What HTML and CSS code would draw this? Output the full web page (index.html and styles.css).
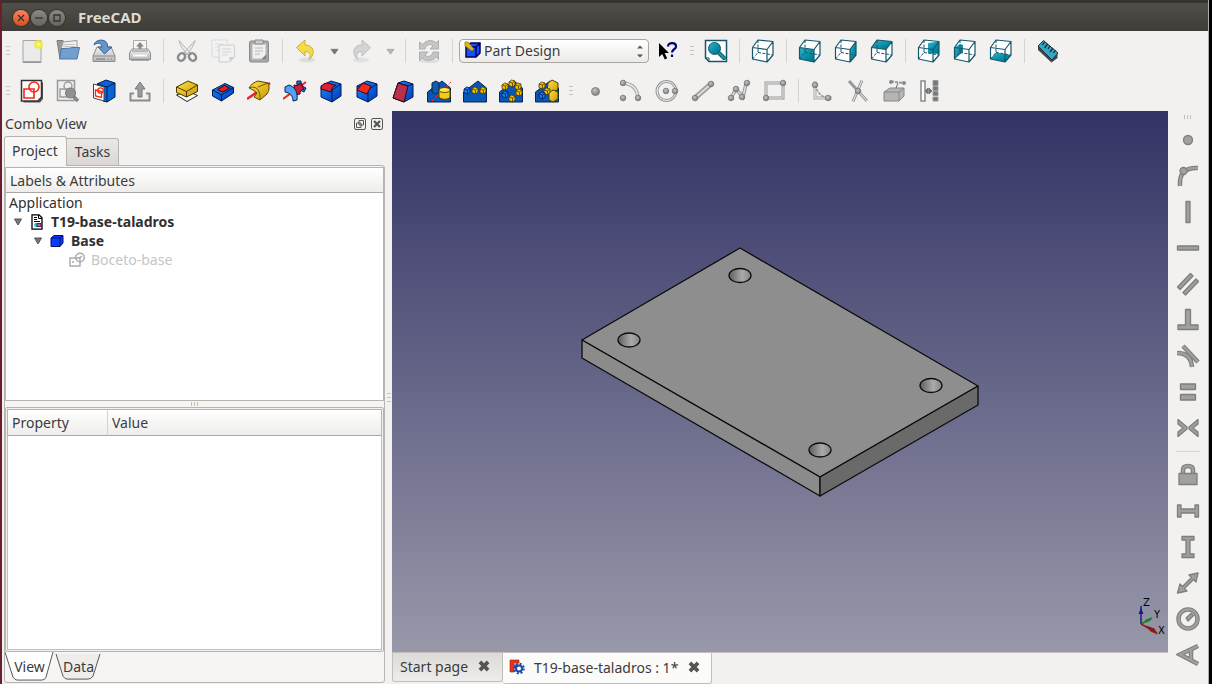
FILE: index.html
```html
<!DOCTYPE html>
<html lang="en">
<head>
<meta charset="utf-8">
<title>FreeCAD</title>
<link rel="stylesheet" href="styles.css">
</head>
<body>
<svg class="defs" aria-hidden="true">
  <defs>
    <linearGradient id="gTeal" x1="0" y1="0" x2="1" y2="1"><stop offset="0" stop-color="#35b4cc"/><stop offset=".6" stop-color="#058aa3"/><stop offset="1" stop-color="#04708a"/></linearGradient>
    <linearGradient id="gBlue" x1="0" y1="0" x2="1" y2="1"><stop offset="0" stop-color="#1a8cff"/><stop offset="1" stop-color="#0038b8"/></linearGradient>
    <linearGradient id="gGold" x1="0" y1="0" x2="1" y2="1"><stop offset="0" stop-color="#ffe14a"/><stop offset="1" stop-color="#c99700"/></linearGradient>
    <linearGradient id="gGrey" x1="0" y1="0" x2="0" y2="1"><stop offset="0" stop-color="#f4f4f4"/><stop offset="1" stop-color="#b5b5b5"/></linearGradient>
    <radialGradient id="gBall" cx=".4" cy=".35" r=".7"><stop offset="0" stop-color="#c4c4c4"/><stop offset="1" stop-color="#777"/></radialGradient>
    <radialGradient id="gSun"><stop offset="0" stop-color="#fffbb0"/><stop offset=".55" stop-color="#f5ea2c"/><stop offset="1" stop-color="#f5ea2c" stop-opacity="0"/></radialGradient>
    <linearGradient id="gHole" x1="0" y1="0" x2="1" y2="0"><stop offset="0" stop-color="#5e5e5e"/><stop offset=".6" stop-color="#aaa"/><stop offset="1" stop-color="#858585"/></linearGradient>
    <g id="wire" fill="none" stroke="#14566a" stroke-width="1.2" stroke-linejoin="round">
      <path d="M1.5 8.5 16 10.5V23L1.5 20zM1.5 8.5 7 1 22 2.5 16 10.5M22 2.5V16L16 23"/>
      <path d="M7 1V13.5L1.5 20M7 13.5 22 16" stroke-width="1" stroke-dasharray="3 1.5"/>
    </g>
    <g id="ball"><circle r="2.8" fill="url(#gBall)" stroke="#777" stroke-width=".8"/></g>
    <g id="cubeBody" stroke="#001850" stroke-width="1" stroke-linejoin="round">
      <path d="M2 7 12 2l10 3v12l-9 6L2 18z" fill="url(#gBlue)"/>
      <path d="M2 7l11 4 9-6M13 11v12" fill="none"/>
    </g>
    <g id="nugget" stroke="#4c3900" stroke-width=".8" stroke-linejoin="round">
      <path d="M0 2 2.500 0 6 1v4L3.500 7 0 5.500z" fill="#f2c200"/><path d="M0 2 3.500 3 6 1M3.500 3v4" fill="none"/>
    </g>
    <g id="bluenugget" stroke="#001850" stroke-width=".8" stroke-linejoin="round">
      <path d="M0 2 2.500 0 6 1v4L3.500 7 0 5.500z" fill="#1c80f0"/><path d="M0 2 3.500 3 6 1M3.500 3v4" fill="none"/>
    </g>
    <path id="slab" d="M.5 13 15 2l8.500 7v14H.5z" fill="#0957b4" stroke="#012554"/>
    <g id="sketchPic" fill="none" stroke="#f22a14" stroke-width="1.600"><path d="M4 10h10v9H4z"/><circle cx="14" cy="8" r="5"/></g>
  </defs>
</svg>

<div class="window">
<header class="titlebar">
  <button class="win-btn close" aria-label="Close"><svg viewBox="0 0 16 16"><path d="m5 5 6 6m0-6-6 6"/></svg></button>
  <button class="win-btn" aria-label="Minimize"><svg viewBox="0 0 16 16"><path d="M4 8h8"/></svg></button>
  <button class="win-btn" aria-label="Maximize"><svg viewBox="0 0 16 16"><path d="M5 5h6v6H5z"/></svg></button>
  <h1 class="title">FreeCAD</h1>
</header>

<div class="toolbar" role="toolbar" aria-label="File and view">
  <span class="grip"></span>
  <button class="tool" aria-label="New"><svg viewBox="0 0 24 24"><path d="M3 1.500h18v21H3z" fill="#ebebeb" stroke="#a5a5a5"/><path d="M2.500 23.500h19" stroke="#999"/><circle cx="18.500" cy="5.500" r="5.500" fill="url(#gSun)"/></svg></button>
  <button class="tool" aria-label="Open"><svg viewBox="0 0 24 24"><path d="M1 1.500h6l1 2h12v10L4 20z" fill="#999" stroke="#7b7b7b"/><path d="M7 3 21 1.500 21 10H5z" fill="#f0f0f0" stroke="#999"/><path d="M7 5.500h12M7 7.500h12" stroke="#c5c5c5"/><path d="M5.500 9.500q9 0 10-1H23.500L21 20H3.500z" fill="#729fcf" stroke="#4a78ad"/></svg></button>
  <button class="tool" aria-label="Save"><svg viewBox="0 0 24 24"><path d="M5 8h14l4 9v5.500H1V17z" fill="url(#gGrey)" stroke="#8b8b8b"/><path d="M1 17h22" stroke="#8b8b8b"/><path d="M4 20h9m3 0h1m2 0h1" stroke="#777"/><path d="M2 6C3 0 14-1 15.500 5.500V8H20l-7.500 7L6 8h4C9.500 4 6 3 2 6z" fill="#6895c9" stroke="#35659c"/></svg></button>
  <button class="tool" aria-label="Print"><svg viewBox="0 0 24 24"><path d="M5.500 11V1.500h13V11" fill="#f7f7f7" stroke="#aaa"/><path d="M12 3l4 4.500h-2.500V11h-3V7.500H8z" fill="#888"/><path d="M1.500 14 4 10h16l2.500 4v6.500h-21z" fill="url(#gGrey)" stroke="#8d8d8d"/><path d="M4 12h16" stroke="#888"/><path d="M5 16.500h14" stroke="#fff" stroke-width="2"/><path d="M3 21.500h18" stroke="#aaa"/></svg></button>
  <span class="sep"></span>
  <button class="tool" aria-label="Cut"><svg viewBox="0 0 24 24"><path d="M4 1.500Q5 8 14 17l2-2zM20 1.500Q19 8 10 17l-2-2z" fill="#eee" stroke="#b5b5b5"/><g fill="none" stroke="#8b8b8b" stroke-width="2.500"><ellipse cx="6.500" cy="18" rx="3.300" ry="4" transform="rotate(35 6.500 18)"/><ellipse cx="17.500" cy="18" rx="3.300" ry="4" transform="rotate(-35 17.500 18)"/></g></svg></button>
  <button class="tool" aria-label="Copy"><svg viewBox="0 0 24 24"><path d="M1 1h15v17H1z" fill="#f3f3f3" stroke="#dadada"/><path d="M4 5h9M4 8h9M4 11h4" stroke="#ddd"/><path d="M8 6h15.500v12l-5 5H8z" fill="#f1f1f1" stroke="#cecece"/><path d="M11 10h9M11 13h9M11 16h6" stroke="#ddd" stroke-width="1.500"/><path d="M23.500 18h-5v5z" fill="#ccc"/></svg></button>
  <button class="tool" aria-label="Paste"><svg viewBox="0 0 24 24"><rect x="2.500" y="2" width="19" height="21" rx="1.500" fill="#aaa" stroke="#8a8a8a"/><path d="M5 5h14v15H5z" fill="#efefef" stroke="#bbb"/><path d="M8 1h8v4H8z" fill="#ccc" stroke="#8a8a8a"/><path d="M8 9h8M8 12h8M8 15h5" stroke="#ccc" stroke-width="1.500"/><path d="M19.500 15v5.500H14z" fill="#888"/></svg></button>
  <span class="sep"></span>
  <button class="tool" aria-label="Undo"><svg viewBox="0 0 24 24"><ellipse cx="13" cy="21" rx="8" ry="2.500" fill="#ddd"/><path d="M2.500 8.500 11 1v5c9 0 11 9 4 14.500 3-6 0-8-4-8V17z" fill="#f3dc48" stroke="#cbb12c"/></svg></button>
  <button class="tool drop" aria-label="Undo list"><svg viewBox="0 0 10 8"><path d="M1 1.500h8L5 7z" fill="#777" stroke="#777"/></svg></button>
  <button class="tool" aria-label="Redo"><svg viewBox="0 0 24 24"><ellipse cx="11" cy="21" rx="8" ry="2.500" fill="#e1e1e1"/><path d="M20.500 8.500 12 1v5C3 6 1 15 8 20.500 5 14.500 8 12.500 12 12.500V17z" fill="#d4d4d4" stroke="#bdbdbd"/></svg></button>
  <button class="tool drop" aria-label="Redo list"><svg viewBox="0 0 10 8"><path d="M1 1.500h8L5 7z" fill="#b4b4b4" stroke="#aaa"/></svg></button>
  <span class="sep"></span>
  <button class="tool" aria-label="Refresh"><svg viewBox="0 0 24 24"><ellipse cx="12" cy="22" rx="10" ry="2" fill="#ddd"/><path d="M2.500 10V3l3 2.500C10 0 17 1 19 4l2.500-2.500V10H13l3-3c-3-3-7-1-8 3zM21.500 13v7.500L19 18c-5 5-11 4-14 1l-2.500 2.500V13H11l-3 3c3 3 7 1 8-3z" fill="#c5c5c5" stroke="#aeaeae"/></svg></button>
  <span class="sep"></span>
  <span class="combo">
    <svg class="combo-icon" viewBox="0 0 18 18"><path d="M2 5 7 2h9v10l-4 4H2z" fill="#1450ff" stroke="#000050" stroke-width="1.500"/><path d="M2 6h10l4-4M12 6v10" fill="none" stroke="#000050" stroke-width="1.500"/><path d="M1 1h3l6 7-2 2-7-5z" fill="#e2b51d" stroke="#8b6b00" stroke-width=".7"/></svg>
    <select class="workbench" aria-label="Workbench"><option>Part Design</option></select>
    <svg class="combo-arrows" viewBox="0 0 8 14"><path d="M1 4.500h6L4 1.500zM1 10.500h6L4 13.500z" fill="#555"/></svg>
  </span>
  <button class="tool" aria-label="What's this?"><svg viewBox="0 0 24 24"><path d="M3 4v14l3.200-3 2.600 5.500 2.400-1.200-2.600-5.300H13z" fill="#000"/><path d="M12 7.500c0-4.500 8-4.500 8 0 0 3-4 2.500-4 6M16 15.500v2.500" fill="none" stroke="#00007d" stroke-width="2.200"/></svg></button>
  <span class="grip"></span>
  <button class="tool" aria-label="Fit all"><svg viewBox="0 0 24 24"><path d="M1.500 1.500h21v21H5l-3.500-3.500z" fill="#fff" stroke="#14566a" stroke-width="1.500"/><path d="M1.500 19H5v3.500" fill="none" stroke="#14566a"/><path d="m15 14 5 5" stroke="#14566a" stroke-width="4" stroke-linecap="round"/><path d="m15 14 5 5" stroke="#1a9ab2" stroke-width="2" stroke-linecap="round"/><circle cx="10.500" cy="9.500" r="6" fill="url(#gTeal)" stroke="#14566a"/></svg></button>
  <span class="sep"></span>
  <button class="tool" aria-label="Axonometric"><svg viewBox="0 0 24 24"><path d="M1.500 8.500 7 1l15 1.500V16l-6 7-14.500-3z" fill="#fff"/><use href="#wire"/></svg></button>
  <span class="sep"></span>
  <button class="tool" aria-label="Front"><svg viewBox="0 0 24 24"><path d="M1.500 8.500 7 1l15 1.500V16l-6 7-14.500-3z" fill="#fff"/><path d="M1.500 8.500 16 10.500V23L1.500 20z" fill="url(#gTeal)"/><use href="#wire"/></svg></button>
  <button class="tool" aria-label="Right"><svg viewBox="0 0 24 24"><path d="M1.500 8.500 7 1l15 1.500V16l-6 7-14.500-3z" fill="#fff"/><path d="M16 10.500 22 2.500V16l-6 7z" fill="url(#gTeal)"/><use href="#wire"/></svg></button>
  <button class="tool" aria-label="Top"><svg viewBox="0 0 24 24"><path d="M1.500 8.500 7 1l15 1.500V16l-6 7-14.500-3z" fill="#fff"/><path d="M1.500 8.500 7 1l15 1.500-6 8z" fill="url(#gTeal)"/><use href="#wire"/></svg></button>
  <span class="sep"></span>
  <button class="tool" aria-label="Rear"><svg viewBox="0 0 24 24"><path d="M1.500 8.500 7 1l15 1.500V16l-6 7-14.500-3z" fill="#fff"/><path d="M11 4 22 2.500V15l-11-1z" fill="url(#gTeal)"/><use href="#wire"/></svg></button>
  <button class="tool" aria-label="Left"><svg viewBox="0 0 24 24"><path d="M1.500 8.500 7 1l15 1.500V16l-6 7-14.500-3z" fill="#fff"/><path d="M1.500 8.500 7 5l3 1v7l-8.500 7z" fill="url(#gTeal)"/><use href="#wire"/></svg></button>
  <button class="tool" aria-label="Bottom"><svg viewBox="0 0 24 24"><path d="M1.500 8.500 7 1l15 1.500V16l-6 7-14.500-3z" fill="#fff"/><path d="M1.500 20 7 13.500 22 16l-6 7z" fill="url(#gTeal)"/><use href="#wire"/></svg></button>
  <span class="sep"></span>
  <button class="tool" aria-label="Measure"><svg viewBox="0 0 24 24"><path d="M2 6v5l13.500 12.500 6-4.500v-4z" fill="#444"/><path d="M2 7 7.500 1.500 22 14l-6 7z" fill="#35a5c8" stroke="#1b333c"/><path d="m8.500 3-2 3m5-1-3 4m5.500-2-2 3m5-1-3 4m5.500-2-2 3" stroke="#10303a" stroke-width="1.300"/></svg></button>
</div>

<div class="toolbar" role="toolbar" aria-label="Part Design">
  <span class="grip"></span>
  <button class="tool" aria-label="New sketch"><svg viewBox="0 0 24 24"><path d="M3.500 3.500H23V20l-3 3.500H3.500z" fill="#555"/><path d="M1.500 1.500h20V18L18 22H1.500z" fill="#fff" stroke="#333" stroke-width="1.500"/><use href="#sketchPic"/></svg></button>
  <button class="tool" aria-label="View sketch"><svg viewBox="0 0 24 24"><path d="M1.500 1.500h17v20h-17z" fill="#eee" stroke="#999" stroke-width="1.500"/><path d="M4 10h9v8H4z" fill="none" stroke="#999" stroke-width="1.300"/><circle cx="12" cy="7" r="4" fill="none" stroke="#999" stroke-width="1.300"/><path d="m17 17 5 5" stroke="#888" stroke-width="3.500"/><circle cx="14.500" cy="14" r="5" fill="#919191" stroke="#777"/></svg></button>
  <button class="tool" aria-label="Map sketch"><svg viewBox="0 0 24 24"><path d="M5 5 14 1l9 3v14l-8 5-4-1z" fill="#0664d8" stroke="#001c50"/><path d="M5 5l10 3 8-4M15 8v15" fill="none" stroke="#001c50"/><path d="M1.500 5 12 8v14L1.500 19z" fill="#fff" stroke="#444"/><path d="M3.500 11l6 1.500v6l-6-1.500z" fill="none" stroke="#f22a14" stroke-width="1.300"/><circle cx="8.500" cy="11.500" r="2.700" fill="none" stroke="#f22a14" stroke-width="1.300"/></svg></button>
  <button class="tool" aria-label="Leave sketch"><svg viewBox="0 0 24 24"><path d="M6 14.500H2.500v7h19v-7H18" fill="none" stroke="#8b8b8b" stroke-width="2"/><path d="M12 3l5 7h-3v8h-4v-8H7z" fill="#9c9c9c" stroke="#777"/></svg></button>
  <span class="sep"></span>
  <button class="tool" aria-label="Pad"><svg viewBox="0 0 24 24"><path d="m1.500 16 10.500 6.500 10.500-6-10-4.500z" fill="#fff" stroke="#222"/><path d="M1.500 8 13 2l9.500 4v6.500l-11 5.500-10-4.500z" fill="url(#gGold)" stroke="#4b3a00"/><path d="M1.500 8l10 4.500 11-6.500M11.500 12.500V18" fill="none" stroke="#4b3a00"/></svg></button>
  <button class="tool" aria-label="Pocket"><svg viewBox="0 0 24 24"><path d="M1.500 11 14 4.500l8.500 4V14l-12 8-9-5z" fill="url(#gBlue)" stroke="#001850"/><path d="M1.500 11l9 5 12-7.500M10.500 16v6" fill="none" stroke="#001850"/><path d="m6.500 10.500 7-4 5 2.500-7 4z" fill="#e22121" stroke="#400"/></svg></button>
  <button class="tool" aria-label="Revolution"><svg viewBox="0 0 24 24"><path d="M0 20 23 4" stroke="#e22" stroke-width="2.500"/><path d="M2 9C4 5 8 3 11 2l10 2c2 4 1 8-1 11l-7 6-6-3 3-4-4-3z" fill="url(#gGold)" stroke="#5b4200"/><path d="M2 9c7-3 12 2 11 12M11 8l10-4" fill="none" stroke="#765600"/></svg></button>
  <button class="tool" aria-label="Groove"><svg viewBox="0 0 24 24"><path d="m0 20 23-17" stroke="#e22" stroke-width="2"/><path d="M14 2c-1 5 2 9 7 11l2-4c-4-2-5-4-5-7z" fill="#1671d9" stroke="#012554"/><path d="M11 6c3 1 5 0 6-2l4 6c-3 0-4 3-4 5l-5 1z" fill="#d31b34" stroke="#500014"/><path d="M2 8 6 6c6 2 9 7 8 15l-4 1c0-5-3-8-8-9z" fill="#51a3f1" stroke="#012554"/></svg></button>
  <button class="tool" aria-label="Fillet"><svg viewBox="0 0 24 24"><use href="#cubeBody"/><path d="M2 10C2 6 5 4 9 4l8 2.500c-3 0-4.500 2-4.500 6.500z" fill="#dc2033" stroke="#4b0008"/></svg></button>
  <button class="tool" aria-label="Chamfer"><svg viewBox="0 0 24 24"><use href="#cubeBody"/><path d="m2 11 6-7 8 3-4 8z" fill="#ee2b1c" stroke="#4b0008"/></svg></button>
  <button class="tool" aria-label="Draft"><svg viewBox="0 0 24 24"><path d="m7 4 6-2 9 3v13l-9 5-11-4z" fill="url(#gBlue)" stroke="#001850"/><path d="m7 4 10 3 5-2" fill="none" stroke="#001850"/><path d="m7 4 10 3-4 16-11-4z" fill="#b5324a" stroke="#3b0010"/></svg></button>
  <button class="tool" aria-label="Mirrored"><svg viewBox="0 0 24 24"><use href="#slab"/><path d="m5 4 4-2 3 2v9l-4 2-3-2z" fill="#145cab" stroke="#012554"/><path d="m5 22 19-19" stroke="#f22" stroke-dasharray="3 2"/><path d="M12 11v7c1 3 10 3 11 0v-7z" fill="#f3cb11" stroke="#5b4200"/><ellipse cx="17.500" cy="11" rx="5.500" ry="2.500" fill="#ffe84a" stroke="#5b4200"/></svg></button>
  <button class="tool" aria-label="Linear pattern"><svg viewBox="0 0 24 24"><use href="#slab"/><use href="#bluenugget" x="1" y="8"/><use href="#nugget" x="9" y="8"/><use href="#nugget" x="17" y="8"/></svg></button>
  <button class="tool" aria-label="Polar pattern"><svg viewBox="0 0 24 24"><use href="#slab"/><use href="#nugget" x="3" y="4"/><use href="#nugget" x="10" y="1"/><use href="#nugget" x="16" y="4"/><use href="#nugget" x="17" y="10"/><use href="#nugget" x="10" y="16"/><use href="#bluenugget" x="3" y="12"/></svg></button>
  <button class="tool" aria-label="Multi transform"><svg viewBox="0 0 24 24"><use href="#slab"/><path d="m13 4 4-3 6 3v6l-6 5-5-3z" fill="url(#gGold)" stroke="#4b3a00"/><use href="#nugget" x="4" y="3"/><use href="#nugget" x="9" y="9"/><path d="m14 14 4-3 5 2v7l-5 3-4-2z" fill="url(#gGold)" stroke="#4b3a00"/><use href="#bluenugget" x="4" y="13"/></svg></button>
  <span class="grip"></span>
  <button class="tool" aria-label="Point"><svg viewBox="0 0 24 24"><circle cx="12.500" cy="12.500" r="4" fill="url(#gBall)" stroke="#888"/></svg></button>
  <button class="tool" aria-label="Arc"><svg viewBox="0 0 24 24"><path d="M4 4q14 1 15 15" fill="none" stroke="#a0a0a0" stroke-width="3.500"/><path d="M4 4q14 1 15 15" fill="none" stroke="#eee" stroke-width="1.500"/><use href="#ball" x="4" y="4"/><use href="#ball" x="4" y="19"/><use href="#ball" x="19" y="19"/></svg></button>
  <button class="tool" aria-label="Circle"><svg viewBox="0 0 24 24"><circle cx="11.500" cy="12" r="9.500" fill="none" stroke="#9a9a9a" stroke-width="3"/><circle cx="11.500" cy="12" r="9.500" fill="none" stroke="#f1f1f1"/><use href="#ball" x="11" y="12"/><use href="#ball" x="20" y="12"/></svg></button>
  <button class="tool" aria-label="Line"><svg viewBox="0 0 24 24"><path d="M4 19 20 5" stroke="#999" stroke-width="5"/><path d="M4 19 20 5" stroke="#ddd" stroke-width="2"/><use href="#ball" x="4" y="19"/><use href="#ball" x="20" y="5"/></svg></button>
  <button class="tool" aria-label="Polyline"><svg viewBox="0 0 24 24"><path d="m4 19 5-9 7 8 3-13" fill="none" stroke="#999" stroke-width="3.500"/><path d="m4 19 5-9 7 8 3-13" fill="none" stroke="#ddd" stroke-width="1.500"/><use href="#ball" x="4" y="19"/><use href="#ball" x="9" y="10"/><use href="#ball" x="15" y="18"/><use href="#ball" x="20" y="4"/></svg></button>
  <button class="tool" aria-label="Rectangle"><svg viewBox="0 0 24 24"><path d="M3 4h17v15H3z" fill="none" stroke="#999" stroke-width="3"/><path d="M3 4h17v15H3z" fill="none" stroke="#eee"/><use href="#ball" x="20" y="4"/><use href="#ball" x="3" y="19"/></svg></button>
  <span class="sep"></span>
  <button class="tool" aria-label="Sketch fillet"><svg viewBox="0 0 24 24"><path d="M5 2v17h17" fill="none" stroke="#aaa" stroke-width="3"/><path d="M5 2v17h17" fill="none" stroke="#eee"/><path d="M6 6q1 11 12 13" fill="none" stroke="#999" stroke-width="1.500" stroke-dasharray="3 1"/><use href="#ball" x="5" y="6"/><use href="#ball" x="18" y="19"/></svg></button>
  <button class="tool" aria-label="Trim"><svg viewBox="0 0 24 24"><path d="M16 1.500 7 22.500M3 2l9 10 9 10" stroke="#999" stroke-width="3" fill="none"/><path d="M16 1.500 7 22.500M12 12l9 10" stroke="#eee" fill="none"/><use href="#ball" x="12" y="12"/></svg></button>
  <button class="tool" aria-label="External geometry"><svg viewBox="0 0 24 24"><path d="m2 13 6-4h14v8l-5 5H2z" fill="#b5b5b5" stroke="#888"/><path d="M2 13h15l5-4M17 13v9" fill="none" stroke="#888"/><path d="m14 9 2-5" stroke="#666"/><path d="M9 2.500 22 4" stroke="#999" stroke-width="2" stroke-dasharray="3 1"/><circle cx="9" cy="3" r="2" fill="#888"/><circle cx="22" cy="4" r="2" fill="#888"/></svg></button>
  <button class="tool" aria-label="Construction mode"><svg viewBox="0 0 24 24"><path d="M3 2h4v20H3z" fill="#fff" stroke="#888" stroke-width="1.500"/><path d="M15 1.500h5v5h-5zm0 6h5v4h-5zm0 5h5v4h-5zm0 5.500h5v4h-5z" fill="#777" stroke="#999"/><path d="m7 12 3-3v6zm7 0-3-3v6z" fill="#777" stroke="#777"/></svg></button>
</div>

<main class="workspace">
  <aside class="dock">
    <div class="dock-head">
      <h2 class="dock-title">Combo View</h2>
      <button class="dock-btn" aria-label="Float"><svg viewBox="0 0 12 12"><rect x=".5" y=".5" width="11" height="11" rx="1.500"/><path d="M5 2.500h4.500V7H5zM2.500 5H7v4.500H2.500z"/></svg></button>
      <button class="dock-btn" aria-label="Close dock"><svg viewBox="0 0 12 12"><rect x=".5" y=".5" width="11" height="11" rx="1.500"/><path d="m3 3 6 6m0-6-6 6" stroke-width="2.200"/></svg></button>
    </div>
    <div class="tabs" role="tablist">
      <button class="tab active" role="tab" aria-selected="true">Project</button>
      <button class="tab" role="tab" aria-selected="false">Tasks</button>
    </div>
    <div class="panel">
      <section class="tree">
        <div class="col-head">Labels &amp; Attributes</div>
        <ul class="nodes">
          <li class="node">Application</li>
          <li class="node level1 strong"><svg class="caret" viewBox="0 0 8 8"><path d="M.5 1h7L4 7z"/></svg><svg class="node-icon" viewBox="0 0 16 16"><path d="M3 .8h7l3 3v11.400H3z" fill="#fff" stroke="#000" stroke-width="1.300"/><path d="M9.500 1v3.500H13M5 3.500h3M5 5.500h3M5 7.500h6" fill="none" stroke="#000"/><circle cx="7" cy="11" r="2" fill="#3cc"/><path d="M8 9.500h4v3H8z" fill="#c5c" stroke="#000" stroke-width=".7"/></svg><span>T19-base-taladros</span></li>
          <li class="node level2 strong"><svg class="caret" viewBox="0 0 8 8"><path d="M.5 1h7L4 7z"/></svg><svg class="node-icon" viewBox="0 0 16 16"><path d="m2 5 3-2.500h9V10l-3 3.500H2z" fill="#0a3cff" stroke="#001060"/><path d="M2 5h9l3-2.500M11 5v8.500" fill="none" stroke="#001060"/></svg><span>Base</span></li>
          <li class="node level3 hidden-node"><svg class="node-icon" viewBox="0 0 16 16"><path d="M1 6h10v8H1z" fill="none" stroke="#aaa" stroke-width="1.400"/><circle cx="11" cy="5.500" r="4.300" fill="none" stroke="#aaa" stroke-width="1.400"/><path d="m3 10h2m5-4 3-2" stroke="#aaa" stroke-width="1.400"/></svg><span>Boceto-base</span></li>
        </ul>
      </section>
      <div class="split-h"><span class="grip-h"></span></div>
      <section class="props">
        <table class="prop-table">
          <thead><tr><th class="prop-col">Property</th><th>Value</th></tr></thead>
        </table>
      </section>
      <div class="bottom-tabs" role="tablist">
        <button class="slant active" role="tab" aria-selected="true"><svg viewBox="0 0 49 31" preserveAspectRatio="none"><path d="M0 0 8 26Q10 29 12 29H37Q40 29 41 26L48 0"/></svg><span>View</span></button>
        <button class="slant" role="tab" aria-selected="false"><svg viewBox="0 0 49 31" preserveAspectRatio="none"><path d="M2 2 9 25Q11 28 13 28H34Q37 28 39 25L46 2"/></svg><span>Data</span></button>
      </div>
    </div>
  </aside>
  <div class="split-v"><span class="grip-v"></span></div>

  <section class="documents">
    <div class="viewport">
      <svg class="scene" viewBox="392 111 776 541" role="img" aria-label="3D view of the plate">
        <g stroke="#0c0c0c" stroke-width="1.300" stroke-linejoin="round">
          <path d="M740 248 978 386 820 477 582 340z" fill="#8e8e8e"/>
          <path d="M582 340 820 477V496L582 358z" fill="#8b8b8b"/>
          <path d="M978 386V405L820 496V477z" fill="#6a6a6a"/>
          <g fill="url(#gHole)">
            <ellipse cx="740" cy="275.500" rx="11" ry="7"/><ellipse cx="629" cy="340" rx="11" ry="7"/><ellipse cx="931" cy="385.500" rx="11" ry="7"/><ellipse cx="820" cy="450" rx="11" ry="7"/>
          </g>
        </g>
        <g fill="none" stroke-width="1.500">
          <path d="M1141 624V606" stroke="#1b1b86"/><path d="M1138.500 614l2.500-6 2.500 6z" fill="#1b1b86" stroke="none"/>
          <path d="m1141 624 11-6" stroke="#14801c"/><path d="m1145 620 5-2 .5 2.500-4 2z" fill="#14801c" stroke="none"/>
          <path d="m1141 624 16 9" stroke="#8d1b1b"/><path d="m1148 627 6 2 2 4-5-2z" fill="#8d1b1b" stroke="#8d1b1b"/>
        </g>
        <g class="axis"><text x="1143" y="606">Z</text><text x="1154" y="618">Y</text><text x="1158" y="634">X</text></g>
      </svg>
    </div>
    <div class="doc-tabs" role="tablist">
      <div class="doc-tab"><button class="doc-label" role="tab" aria-selected="false">Start page</button><button class="doc-close" aria-label="Close Start page"><svg viewBox="0 0 12 12"><path d="m2.500 2.500 7 7m0-7-7 7"/></svg></button></div>
      <div class="doc-tab active"><svg class="doc-icon" viewBox="0 0 16 16"><path d="M1 1h9v3H5v2h3v3H5v4H1z" fill="#e6361f" stroke="#a01b0c" stroke-width=".6"/><circle cx="10" cy="9.500" r="3" fill="#fff" stroke="#1b4ba8" stroke-width="2"/><circle cx="10" cy="9.500" r="4.800" fill="none" stroke="#1b4ba8" stroke-width="2" stroke-dasharray="2 1.770"/></svg><button class="doc-label" role="tab" aria-selected="true">T19-base-taladros : 1*</button><button class="doc-close" aria-label="Close document"><svg viewBox="0 0 12 12"><path d="m2.500 2.500 7 7m0-7-7 7"/></svg></button></div>
    </div>
  </section>

  <div class="side-tools" role="toolbar" aria-label="Constraints">
    <span class="grip-h"></span>
    <button class="tool" aria-label="Coincident"><svg viewBox="0 0 24 24"><circle class="s" cx="12" cy="12" r="4.500"/></svg></button>
    <button class="tool" aria-label="Point on object"><svg viewBox="0 0 24 24"><path class="l1" d="M4 22C3 10 9 3 22 4"/><path class="l2" d="M4 22C3 10 9 3 22 4"/><circle class="s" cx="7.500" cy="7" r="3.500"/></svg></button>
    <button class="tool" aria-label="Vertical"><svg viewBox="0 0 24 24"><path class="s" d="M10 1.500h4v21h-4z"/></svg></button>
    <button class="tool" aria-label="Horizontal"><svg viewBox="0 0 24 24"><path class="s" d="M1.500 10h21v4h-21z"/></svg></button>
    <button class="tool" aria-label="Parallel"><svg viewBox="0 0 24 24"><path class="s" d="m1.500 15 13-13.500L17 4 4 17.500zM7 20.500 20 7l2.500 2.500L9.500 23z"/></svg></button>
    <button class="tool" aria-label="Perpendicular"><svg viewBox="0 0 24 24"><path class="s" d="M9.500 1.500h5V17H22v4.500H2V17h7.500z"/></svg></button>
    <button class="tool" aria-label="Tangent"><svg viewBox="0 0 24 24"><path class="l1" d="M1 9q14 0 15 14M7 2l15 16"/><path class="l2" d="M1 9q14 0 15 14M7 2l15 16"/></svg></button>
    <button class="tool" aria-label="Equal"><svg viewBox="0 0 24 24"><path class="s" d="M4.500 4h15v5.500h-15zm0 10.500h15V20h-15z"/></svg></button>
    <button class="tool" aria-label="Symmetric"><svg viewBox="0 0 24 24"><path class="s" d="M2 3.500 11 11v2L2 20.500V16l5-4-5-4zM22 3.500 13 11v2l9 7.500V16l-5-4 5-4z"/></svg></button>
    <span class="sep-h"></span>
    <button class="tool" aria-label="Lock"><svg viewBox="0 0 24 24"><path class="l1" d="M7 12V7q0-4 5-4t5 4v5"/><path class="l2" d="M7 12V7q0-4 5-4t5 4v5"/><path class="s" d="M3 10.500h18v11H3z"/></svg></button>
    <button class="tool" aria-label="Horizontal distance"><svg viewBox="0 0 24 24"><path class="s" d="M1.500 6H5v4h14V6h3.500v12H19v-4H5v4H1.500z"/></svg></button>
    <button class="tool" aria-label="Vertical distance"><svg viewBox="0 0 24 24"><path class="s" d="M6 1.500h12V5h-4v14h4v3.500H6V19h4V5H6z"/></svg></button>
    <button class="tool" aria-label="Distance"><svg viewBox="0 0 24 24"><path class="s" d="M22 2 20 11l-2.500-2.500-9 9L11 20l-9.500 2L4 13l2.500 2.500 9-9L13 4z"/></svg></button>
    <button class="tool" aria-label="Radius"><svg viewBox="0 0 24 24"><circle class="l1" cx="12" cy="12" r="9.500"/><circle class="l2" cx="12" cy="12" r="9.500"/><path class="s" d="m10 11 5-4.500 2.500 2L12 14z"/></svg></button>
    <button class="tool" aria-label="Angle"><svg viewBox="0 0 24 24"><path class="l1" d="M22 3 4 11.500 22 21M15 7v10"/><path class="l2" d="M22 3 4 11.500 22 21M15 7v10"/></svg></button>
  </div>
</main>
</div>
</body>
</html>
```

FILE: styles.css
```css
* { box-sizing: border-box; }
body {
  margin: 0;
  height: 100vh;
  overflow: hidden;
  background: #000;
  color: #3c3c3c;
  font: 14px/19px "Noto Sans", "Open Sans", sans-serif;
}
button { margin: 0; padding: 0; border: 0; background: none; color: inherit; font: inherit; }
svg { display: block; }
.defs { position: absolute; width: 0; height: 0; }
.window {
  display: flex;
  flex-direction: column;
  height: 100vh;
  margin-right: 3px;
  border-left: 2px solid #6b1d30;
  border-right: 1px solid #aaa;
  background: #f2f1f0;
}

.titlebar {
  display: flex;
  flex: none;
  align-items: center;
  gap: 2px;
  height: 31px;
  padding: 1px 11px 0;
  border-top: 3px solid #35342f;
  background: linear-gradient(#504f49, #3d3c38);
}
.win-btn {
  width: 16px;
  height: 16px;
  border-radius: 50%;
  background: linear-gradient(#8b8981, #66645d);
  box-shadow: 0 0 0 1px #33322e;
}
.win-btn.close { background: linear-gradient(#f58461, #df4c1d); }
.win-btn svg { width: 16px; height: 16px; fill: none; stroke: #34332e; stroke-width: 1.300; }
.title { margin: 0 0 0 11px; color: #dfdbd2; font-size: 15px; line-height: 19px; }

.toolbar { display: flex; flex: none; align-items: center; height: 40px; }
.tool { display: flex; flex: none; align-items: center; justify-content: center; width: 36px; height: 36px; }
.tool svg { width: 24px; height: 24px; }
.tool.drop { width: 20px; }
.tool.drop svg { width: 9px; height: 7px; }
.grip { flex: none; width: 12px; height: 10px; padding: 0 4px; }
.grip::before, .grip-v::before {
  content: "";
  display: block;
  width: 4px;
  height: 9px;
  background: repeating-linear-gradient(#c9c6c2 0 1px, transparent 1px 4px);
}
.sep { flex: none; width: 11px; height: 24px; border-left: 5px solid transparent; }
.sep::before { content: ""; display: block; width: 1px; height: 24px; background: #d6d3d0; }

.combo { position: relative; flex: none; width: 190px; margin: 0 1px; }
.workbench {
  display: block;
  width: 100%;
  height: 24px;
  padding: 0 20px 2px 24px;
  border: 1px solid #aaa6a1;
  border-radius: 4px;
  background: linear-gradient(#fff, #ebeae8);
  color: #3c3c3c;
  font: inherit;
  appearance: none;
}
.combo-icon { position: absolute; left: 5px; top: 2px; width: 18px; height: 18px; }
.combo-arrows { position: absolute; right: 5px; top: 5px; width: 8px; height: 14px; }

.workspace { display: flex; flex: 1; min-height: 0; }
.dock { display: flex; flex: none; flex-direction: column; width: 384px; padding: 0 1px 1px 2px; }
.dock-head { display: flex; align-items: center; gap: 5px; height: 25px; padding: 0 2px 0 1px; }
.dock-title { flex: 1; margin: 0; font-size: 14px; font-weight: 400; line-height: 19px; }
.dock-btn svg { width: 12px; height: 12px; fill: none; stroke: #555; }
.tabs { display: flex; align-items: flex-end; height: 29px; }
.tab {
  height: 27px;
  padding: 0 8px 2px;
  border: 1px solid #b8b5b1;
  border-left: 0;
  border-bottom: 0;
  border-radius: 0 3px 0 0;
  background: linear-gradient(#eae8e6, #d9d6d3);
}
.tab.active { z-index: 1; height: 30px; margin-bottom: -1px; padding: 0 8px 3px 7px; border-left: 1px solid #b8b5b1; border-radius: 3px 3px 0 0; background: #f7f7f6; }
.panel {
  display: flex;
  flex: 1;
  flex-direction: column;
  min-height: 0;
  padding: 1px 0 0;
  border: 1px solid #b8b5b1;
  border-radius: 0 3px 3px 3px;
  background: #f6f5f4;
}
.tree { flex: 235; min-height: 0; border: 1px solid #b8b5b1; background: #fff; }
.col-head { height: 25px; padding: 3px 4px; border-bottom: 1px solid #aaa7a3; background: linear-gradient(#fff, #eeedeb); line-height: 19px; }
.nodes { margin: 0; padding: 0; list-style: none; }
.node { display: flex; align-items: center; height: 19px; padding-left: 3px; color: #303030; }
.level1 { padding-left: 8px; }
.level2 { padding-left: 28px; }
.level3 { padding-left: 63px; }
.strong { font-weight: 700; }
.hidden-node { color: #c6c6c6; }
.caret { width: 8px; height: 8px; margin-right: 7px; fill: #777; stroke: #555; }
.node-icon { width: 16px; height: 16px; margin-right: 6px; }
.split-h { display: flex; flex: none; align-items: center; justify-content: center; height: 6px; }
.grip-h { display: block; width: 8px; height: 4px; background: repeating-linear-gradient(90deg, #c2bfbb 0 1px, transparent 1px 3px); }
.props { flex: 245; min-height: 0; padding: 1px; border: 1px solid #b8b5b1; border-radius: 2px; background: #fff; box-shadow: inset 0 0 0 1px #f2f1f0, inset 0 0 0 2px #c2bfbb; }
.prop-table { width: 100%; border: 1px solid #b8b5b1; border-bottom: 0; border-spacing: 0; }
.prop-table th { height: 26px; padding: 0 4px; border-bottom: 1px solid #aaa7a3; background: linear-gradient(#fff, #eeedeb); font-weight: 400; text-align: left; }
.prop-table .prop-col { width: 100px; border-right: 1px solid #d5d3d0; }
.bottom-tabs { display: flex; flex: none; height: 30px; }
.slant { position: relative; width: 49px; height: 30px; line-height: 26px; }
.slant svg { position: absolute; inset: 0; width: 100%; height: 100%; fill: #efedeb; stroke: #555; }
.slant.active svg { fill: #fff; }
.slant span { position: relative; }
.split-v { display: flex; flex: none; align-items: center; justify-content: center; width: 6px; }

.documents { display: flex; flex: 1; flex-direction: column; min-width: 0; }
.viewport { flex: 1; min-height: 0; background: linear-gradient(#333366, #9898aa); }
.scene { width: 100%; height: 100%; }
.axis { fill: #000; font: 10px "DejaVu Sans", sans-serif; }
.doc-tabs { display: flex; flex: none; align-items: flex-start; height: 32px; border-top: 1px solid #c2bfbb; }
.doc-tab { display: flex; align-items: center; gap: 9px; height: 29px; padding: 0 11px 2px 7px; border: 1px solid #c2bfbb; border-top: 0; border-radius: 0 0 3px 3px; background: linear-gradient(#dcdad7, #eeedeb); }
.doc-tab.active { height: 31px; padding: 0 10px 2px 6px; border-left: 0; background: #fbfbfa; }
.doc-icon { width: 16px; height: 16px; }
.doc-close svg { width: 14px; height: 14px; fill: none; stroke: #555; stroke-width: 3.200; }

.side-tools { display: flex; flex: none; flex-direction: column; align-items: center; width: 40px; padding-top: 4px; }
.side-tools .grip-h { margin-bottom: 3px; }
.side-tools .sep-h { flex: none; width: 24px; height: 11px; border-top: 5px solid transparent; }
.side-tools .sep-h::before { content: ""; display: block; height: 1px; background: #d6d3d0; }
.s { fill: #a0a09e; stroke: #7e7e7c; stroke-width: 1.300; stroke-linejoin: round; }
.l1 { fill: none; stroke: #7e7e7c; stroke-width: 4.500; }
.l2 { fill: none; stroke: #a0a09e; stroke-width: 2.300; }
```
